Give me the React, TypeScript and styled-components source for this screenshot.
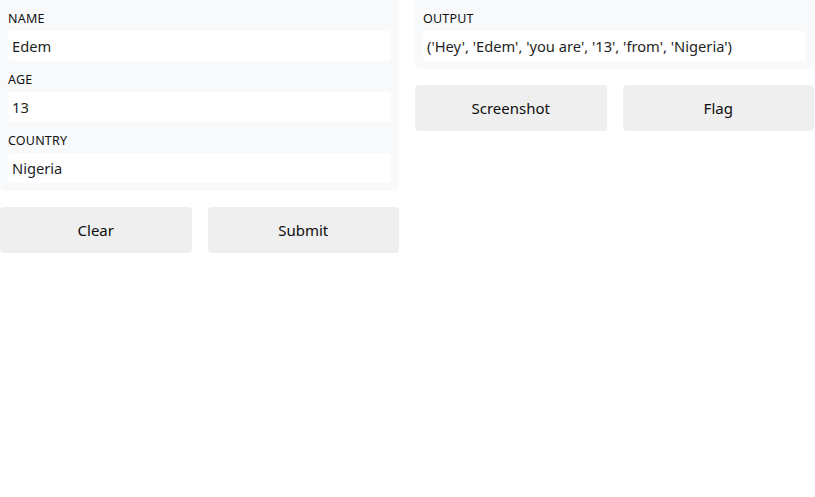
import React from "react";
import styled, { createGlobalStyle } from "styled-components";

const GlobalStyle = createGlobalStyle`
  html, body {
    margin: 0;
    padding: 0;
    background: #ffffff;
  }
  body {
    font-family: "Noto Sans", "Open Sans", Arial, sans-serif;
    color: #1f2328;
  }
`;

const Page = styled.div`
  display: grid;
  grid-template-columns: 399px 399px;
  column-gap: 16px;
  align-items: start;
`;

const Column = styled.div`
  display: flex;
  flex-direction: column;
  gap: 16px;
`;

const Panel = styled.div`
  display: flex;
  flex-direction: column;
  gap: 8px;
  padding: 8px;
  background: #f8f9fb;
  border-radius: 0 0 6px 6px;
`;

const Field = styled.div`
  display: flex;
  flex-direction: column;
`;

const Label = styled.span`
  height: 23px;
  line-height: 22px;
  font-size: 12.5px;
  font-weight: 400;
  letter-spacing: 0.2px;
  text-transform: uppercase;
  color: #111;
`;

const Box = styled.div`
  height: 30px;
  display: flex;
  align-items: center;
  padding: 0 4px;
  background: #ffffff;
  border-radius: 3px;
  font-size: 14.7px;
  color: #1f1f1f;
  white-space: nowrap;
`;

const ButtonRow = styled.div`
  display: grid;
  grid-template-columns: 1fr 1fr;
  gap: 16px;
`;

const Button = styled.button`
  height: 46px;
  border: none;
  border-radius: 4px;
  background: #efefef;
  font-family: inherit;
  font-size: 15px;
  font-weight: 400;
  color: #0d0d0d;
  cursor: pointer;
`;

const inputs = [
  { label: "Name", value: "Edem" },
  { label: "Age", value: "13" },
  { label: "Country", value: "Nigeria" },
];

export default function App() {
  return (
    <>
      <GlobalStyle />
      <Page>
        <Column>
          <Panel>
            {inputs.map((f) => (
              <Field key={f.label}>
                <Label>{f.label}</Label>
                <Box>{f.value}</Box>
              </Field>
            ))}
          </Panel>
          <ButtonRow>
            <Button>Clear</Button>
            <Button>Submit</Button>
          </ButtonRow>
        </Column>
        <Column>
          <Panel>
            <Field>
              <Label>Output</Label>
              <Box>('Hey', 'Edem', 'you are', '13', 'from', 'Nigeria')</Box>
            </Field>
          </Panel>
          <ButtonRow>
            <Button>Screenshot</Button>
            <Button>Flag</Button>
          </ButtonRow>
        </Column>
      </Page>
    </>
  );
}
